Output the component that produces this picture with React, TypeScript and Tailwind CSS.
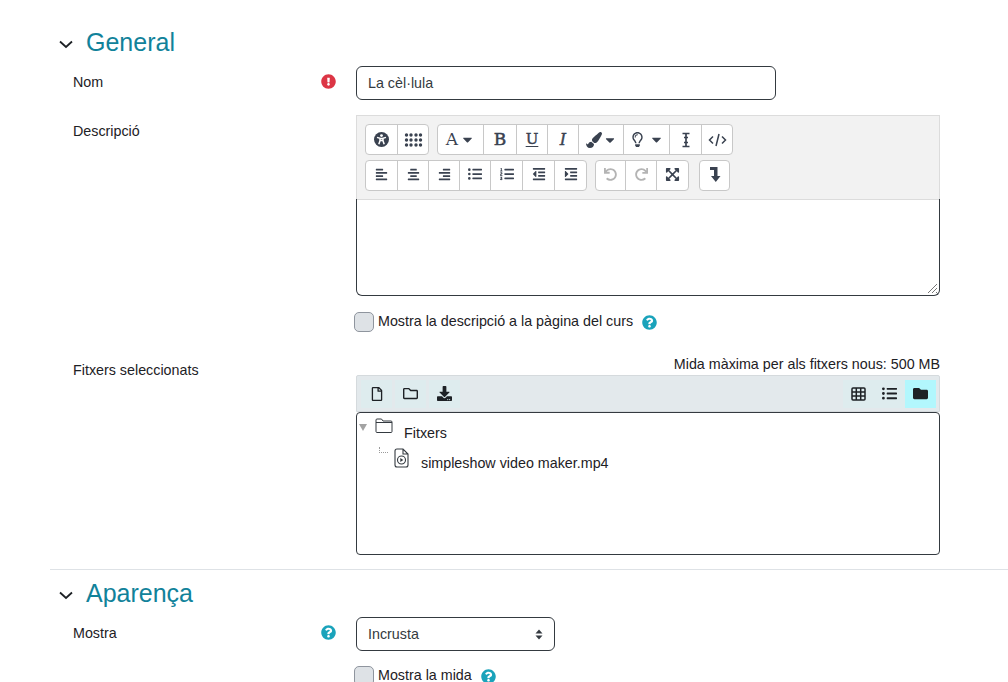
import React from "react";
import {
  FaCaretDown, FaPaintBrush, FaRegLightbulb, FaAlignLeft, FaAlignCenter, FaAlignRight,
  FaListUl, FaListOl, FaOutdent, FaIndent, FaUndo, FaRedo, FaExpandArrowsAlt,
  FaRegFile, FaRegFolder, FaDownload, FaFolder, FaQuestionCircle, FaExclamationCircle,
} from "react-icons/fa";

const ink = "text-[#3a4250]";

function Btn({ w, children, dim, last, up }: { w: string; children: React.ReactNode; dim?: boolean; last?: boolean; up?: boolean }) {
  return (
    <div className={`${w} h-full flex items-center justify-center gap-[2px] ${up ? "pb-[3px]" : ""} ${last ? "" : "border-r border-[#c8c8c8]"} ${dim ? "text-[#b4b4b4]" : ink}`}>
      {children}
    </div>
  );
}

function Group({ children }: { children: React.ReactNode }) {
  return <div className="flex h-[31px] bg-white border border-[#c8c8c8] rounded-[4px]">{children}</div>;
}

function Serif({ children, cls }: { children: React.ReactNode; cls: string }) {
  return <span className={`font-['DejaVu_Serif',serif] leading-none ${cls}`}>{children}</span>;
}

function Help({ cls = "" }: { cls?: string }) {
  return <FaQuestionCircle className={`text-[#1aa3bb] ${cls}`} size={15} />;
}

function Check({ label }: { label: string }) {
  return (
    <div className="flex items-center -ml-[2px]">
      <div className="w-[20px] h-[20px] bg-[#dee2e6] border border-[#8f959e] rounded-[5px]" />
      <span className="ml-[4px] -mt-[2px]">{label}</span>
      <Help cls="ml-[9px]" />
    </div>
  );
}

function Row({ label, icon, children, mt, labelPt = "pt-[6px]" }: { label: string; icon?: React.ReactNode; children: React.ReactNode; mt: string; labelPt?: string }) {
  return (
    <div className={`flex ${mt} pl-[23px]`}>
      <div className={`w-[248px] shrink-0 ${labelPt}`}>{label}</div>
      <div className="w-[35px] shrink-0 pt-[8px]">{icon}</div>
      <div className="w-[584px] shrink-0">{children}</div>
    </div>
  );
}

function Heading({ children, mt }: { children: React.ReactNode; mt: string }) {
  return (
    <div className={`flex items-center h-[36px] ${mt} pl-[8px]`}>
      <svg width="16" height="16" viewBox="0 0 16 16" className="mt-[3px] text-[#1d2125]" fill="none" stroke="currentColor" strokeWidth="1.8">
        <path d="M2 5.5 L8 11 L14 5.5" />
      </svg>
      <h3 className="ml-[12px] text-[25px] leading-[36px] text-[#11829a]">{children}</h3>
    </div>
  );
}

function FpBtn({ children, active }: { children: React.ReactNode; active?: boolean }) {
  return <div className={`w-[31px] h-[28px] flex items-center justify-center text-[#1d2125] ${active ? "bg-[#b2f7fd]" : ""}`}>{children}</div>;
}

export default function App() {
  return (
    <div className="w-[1008px] h-[682px] overflow-hidden bg-white pl-[50px] pt-[24px] text-[14.3px] leading-[21px] text-[#1d2125] font-['Liberation_Sans',Arial,sans-serif]">
      <Heading mt="mt-0">General</Heading>

      <Row label="Nom" mt="mt-[6px]" icon={<FaExclamationCircle className="text-[#dc3545]" size={15} />}>
        <input
          readOnly
          value="La cèl·lula"
          className="block w-[420px] h-[34px] px-[11px] pb-[1px] border border-[#343a40] rounded-[6px] text-[#343a40] outline-none"
        />
      </Row>

      <Row label="Descripció" mt="mt-[15px]">
        <div className="w-[584px] h-[85px] bg-[#f2f2f2] border border-[#dcdcdc] pl-[8px] pt-[8px] flex flex-col gap-[5px]">
          <div className="flex gap-[8px]">
            <Group>
              <Btn w="w-[32px]">
                <svg width="15" height="15" viewBox="0 0 15 15">
                  <circle cx="7.5" cy="7.5" r="7.5" fill="currentColor" />
                  <circle cx="7.5" cy="3.6" r="1.4" fill="#fff" />
                  <path d="M3 5.4 L6 6.3 V8.8 L4.8 12.3 M12 5.4 L9 6.3 V8.8 L10.2 12.3 M6 6.4 H9 M6 8.6 H9" fill="none" stroke="#fff" strokeWidth="1.5" />
                </svg>
              </Btn>
              <Btn w="w-[30px]" last>
                <svg width="19" height="14" viewBox="0 0 19 14" fill="currentColor">
                  {[2, 7, 12].map((y) => [2.5, 7, 12, 16.5].map((x) => <circle key={`${x}-${y}`} cx={x} cy={y} r="1.7" />))}
                </svg>
              </Btn>
            </Group>
            <Group>
              <Btn w="w-[46px]"><Serif cls="text-[17px]">A</Serif><FaCaretDown size={15} /></Btn>
              <Btn w="w-[33px]"><Serif cls="text-[17px] [-webkit-text-stroke:0.5px_#3a4250]">B</Serif></Btn>
              <Btn w="w-[31px]"><Serif cls="text-[15px] underline underline-offset-2 [-webkit-text-stroke:0.4px_#3a4250]">U</Serif></Btn>
              <Btn w="w-[31px]"><Serif cls="text-[16px] italic [-webkit-text-stroke:0.4px_#3a4250]">I</Serif></Btn>
              <Btn w="w-[45px]"><FaPaintBrush size={16} /><FaCaretDown size={14} className="-ml-[1px]" /></Btn>
              <Btn w="w-[46px]"><FaRegLightbulb size={15} /><FaCaretDown size={15} className="ml-[2px]" /></Btn>
              <Btn w="w-[32px]">
                <svg width="10" height="16" viewBox="0 0 10 16" fill="none" stroke="currentColor" strokeWidth="1.7">
                  <path d="M1.5 1.5 H8.5 M1.5 14.5 H8.5 M5 1.5 V14.5 M3 5.5 H7 M3 10.5 H7" />
                </svg>
              </Btn>
              <Btn w="w-[30px]" last>
                <svg width="19" height="14" viewBox="0 0 19 14" fill="none" stroke="currentColor" strokeWidth="1.5">
                  <path d="M5 3.5 L1.5 7 L5 10.5 M14 3.5 L17.5 7 L14 10.5 M11 1 L8 13" />
                </svg>
              </Btn>
            </Group>
          </div>
          <div className="flex gap-[8px]">
            <Group>
              <Btn up w="w-[32px]"><FaAlignLeft size={13} /></Btn>
              <Btn up w="w-[31px]"><FaAlignCenter size={13} /></Btn>
              <Btn up w="w-[31px]"><FaAlignRight size={13} /></Btn>
              <Btn up w="w-[31px]"><FaListUl size={14} /></Btn>
              <Btn up w="w-[32px]"><FaListOl size={14} /></Btn>
              <Btn up w="w-[32px]"><FaOutdent size={14} /></Btn>
              <Btn up w="w-[31px]" last><FaIndent size={14} /></Btn>
            </Group>
            <Group>
              <Btn up w="w-[30px]" dim><FaUndo size={13} /></Btn>
              <Btn up w="w-[31px]" dim><FaRedo size={13} /></Btn>
              <Btn up w="w-[31px]" last><FaExpandArrowsAlt size={15} /></Btn>
            </Group>
            <div className="ml-[2px]">
              <Group>
                <Btn up w="w-[29px]" last>
                  <svg width="12" height="17" viewBox="0 0 12 17" fill="currentColor">
                    <path d="M1 1 H8.5 V10 H11.5 L6.8 16 L2 10 H5 V4 H1 Z" />
                  </svg>
                </Btn>
              </Group>
            </div>
          </div>
        </div>
        <div className="relative w-[584px] h-[97px] border border-t-0 border-[#343a40] rounded-b-[6px] -mt-px">
          <svg className="absolute right-[1px] bottom-[1px] text-[#777]" width="11" height="11" viewBox="0 0 11 11" stroke="currentColor" strokeWidth="1">
            <path d="M1 10 L10 1 M5 10 L10 5 M9 10 L10 9" />
          </svg>
        </div>
        <div className="mt-[16px]"><Check label="Mostra la descripció a la pàgina del curs" /></div>
      </Row>

      <Row label="Fitxers seleccionats" mt="mt-[22px]">
        <div className="text-right h-[21px]">Mida màxima per als fitxers nous: 500 MB</div>
        <div className="flex items-center justify-between h-[37px] bg-[#e3e9ec] border border-[#d5dadd] rounded-t-[2px] pl-[4px] pr-[3px]">
          <div className="flex gap-[3px]">
            <div className="bg-[#deecee]"><FpBtn><FaRegFile size={14} /></FpBtn></div>
            <div className="bg-[#deecee]"><FpBtn><FaRegFolder size={15} /></FpBtn></div>
            <div className="bg-[#deecee]"><FpBtn><FaDownload size={15} /></FpBtn></div>
          </div>
          <div className="flex bg-[#deecee]">
            <FpBtn>
              <svg width="15" height="14" viewBox="0 0 15 14" fill="none" stroke="currentColor" strokeWidth="1.5">
                <rect x="1" y="1" width="13" height="12" rx="1" />
                <path d="M1 5 H14 M1 9 H14 M5.3 1 V13 M9.7 1 V13" />
              </svg>
            </FpBtn>
            <FpBtn><FaListUl size={15} /></FpBtn>
            <FpBtn active><FaFolder size={15} /></FpBtn>
          </div>
        </div>
        <div className="h-[143px] border border-[#343a40] rounded-[4px] pt-[5px]">
          <div className="flex items-start h-[26px]">
            <svg className="ml-[2px] mt-[6px]" width="8" height="7" viewBox="0 0 8 7" fill="#a3a3a3"><path d="M0 0 H8 L4 7 Z" /></svg>
            <svg className="ml-[8px]" width="18" height="16" viewBox="0 0 18 16" fill="none" stroke="#343a40" strokeWidth="1">
              <path d="M1 13.5 V2 Q1 1 2 1 H6.5 L8 3 H16 Q17 3 17 4 V13.5 Q17 14.5 16 14.5 H2 Q1 14.5 1 13.5 Z M1 4.5 H17" />
            </svg>
            <span className="ml-[11px] mt-[5px]">Fitxers</span>
          </div>
          <div className="flex items-start h-[30px]">
            <div className="ml-[22px] mt-[3px] w-[9px] h-[6px] border-l border-b border-dotted border-[#9a9a9a]" />
            <svg className="ml-[6px] mt-[4px]" width="15" height="20" viewBox="0 0 15 20" fill="none" stroke="#343a40" strokeWidth="1.1">
              <path d="M1 3 Q1 1 3 1 H9 L14 6 V17 Q14 19 12 19 H3 Q1 19 1 17 Z M9 1 V6 H14" />
              <circle cx="7.5" cy="12" r="4" />
              <path d="M6.3 10 L9.3 12 L6.3 14 Z" fill="#343a40" stroke="none" />
            </svg>
            <span className="ml-[12px] mt-[9px]">simpleshow video maker.mp4</span>
          </div>
        </div>
      </Row>

      <div className="mt-[14px] border-t border-[#dee2e6]" />

      <Heading mt="mt-[5px]">Aparença</Heading>

      <Row label="Mostra" mt="mt-[6px]" icon={<Help />}>
        <div className="flex items-center justify-between w-[199px] h-[34px] pl-[11px] pr-[11px] border border-[#343a40] rounded-[6px] text-[#343a40]">
          <span>Incrusta</span>
          <svg width="8" height="11" viewBox="0 0 8 11" fill="#343a40"><path d="M4 0.5 L7.5 4.5 H0.5 Z M4 10.5 L0.5 6.5 H7.5 Z" /></svg>
        </div>
        <div className="mt-[15px]"><Check label="Mostra la mida" /></div>
      </Row>
    </div>
  );
}
